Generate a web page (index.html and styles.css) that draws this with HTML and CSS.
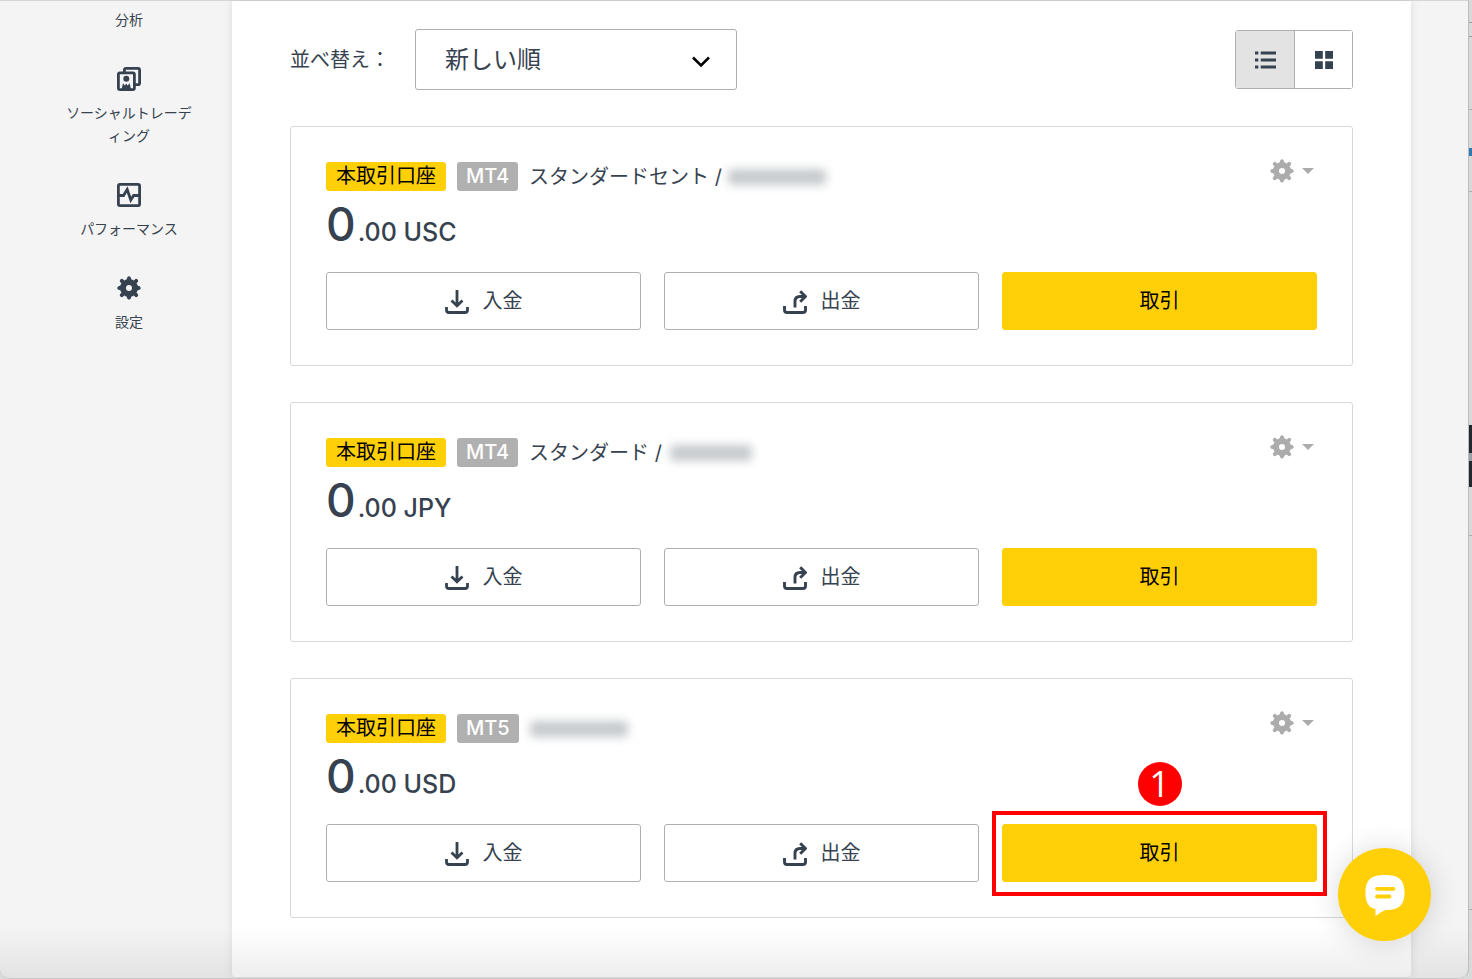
FILE: index.html
```html
<!DOCTYPE html>
<html lang="ja">
<head>
<meta charset="utf-8">
<meta name="viewport" content="width=device-width, initial-scale=1">
<title>口座一覧</title>
<link rel="stylesheet" href="styles.css">
</head>
<body>
<svg class="sprite" aria-hidden="true">
  <symbol id="gear" viewBox="0 0 24 24">
    <circle cx="12" cy="12" r="6" fill="none" stroke="currentColor" stroke-width="6"/>
    <path d="M10.2 1.400Q12-.9 13.800 1.400L14.800 5H9.200ZM10.200 22.600Q12 24.900 13.800 22.600L14.800 19H9.200ZM1.400 10.200Q-.9 12 1.400 13.800L5 14.800V9.200ZM22.600 10.200Q24.900 12 22.600 13.800L19 14.800V9.200Z" fill="currentColor"/>
    <path d="M4.800 4.800l2 2M19.200 4.800l-2 2M4.800 19.200l2-2M19.200 19.200l-2-2" stroke="currentColor" stroke-width="4" stroke-linecap="round"/>
  </symbol>
  <symbol id="deposit" viewBox="0 0 24 24">
    <path d="M12 0v15M6.500 10.500l5.500 5.200 5.500-5.200M1.500 17v3q0 2.500 2.500 2.500h16q2.500 0 2.500-2.500v-3" fill="none" stroke="currentColor" stroke-width="2.800"/>
  </symbol>
  <symbol id="withdraw" viewBox="0 0 24 24">
    <path d="M12 17.500V11.500q0-5 5-5H22.500M17.200 1.200l5.300 5.300-5.300 5.300M1.500 16V20q0 2.500 2.500 2.500h16q2.500 0 2.500-2.500v-4" fill="none" stroke="currentColor" stroke-width="2.900"/>
  </symbol>
</svg>
<div class="screen">
  <div class="window">
    <nav class="sidebar" aria-label="メインメニュー">
      <a class="nav-item" href="#analysis"><span>分析</span></a>
      <a class="nav-item" href="#social">
        <svg class="nav-icon" viewBox="0 0 24 24" fill="none" stroke="currentColor" stroke-width="2.800"><path d="M7.400 5V3q0-1.600 1.600-1.600h12q1.600 0 1.600 1.600v13q0 1.700-1.600 1.700h-3"/><rect x="1.400" y="5.800" width="16" height="16.800" rx="1.500"/><circle cx="9.300" cy="11.700" r="3" fill="currentColor" stroke="none"/><path d="M4.500 22.500L6 16.300l2 2.200 1.300-2 1.300 2 2-2.200 1.500 6.200z" fill="currentColor" stroke="none"/></svg>
        <span>ソーシャルトレーディング</span>
      </a>
      <a class="nav-item" href="#performance">
        <svg class="nav-icon" viewBox="0 0 24 24" fill="none" stroke="currentColor" stroke-width="2.800"><rect x="1.400" y="1.400" width="21.200" height="21.200" rx="1.500"/><path d="M1.500 12.500h5L10.200 6.500l3.600 10.500 2.800-4.500h6"/></svg>
        <span>パフォーマンス</span>
      </a>
      <a class="nav-item" href="#settings"><svg class="nav-icon"><use href="#gear"/></svg><span>設定</span></a>
    </nav>
    <main class="content">
      <div class="toolbar">
        <label for="sort">並べ替え：</label>
        <div class="select-wrap">
          <select id="sort"><option>新しい順</option></select>
          <svg class="chevron" viewBox="0 0 20 12" fill="none" stroke="#000" stroke-width="2.500"><path d="M2 1.500l8 8 8-8"/></svg>
        </div>
        <div class="view-toggle">
          <button class="view active" type="button" aria-label="リスト表示"><svg class="icon-list" viewBox="0 0 22 18" fill="currentColor"><path d="M0 0h3.500v3.200H0zM6 0h16v3.200H6zM0 7.400h3.500v3.200H0zM6 7.400h16v3.200H6zM0 14.800h3.500V18H0zM6 14.800h16V18H6z"/></svg></button>
          <button class="view" type="button" aria-label="グリッド表示"><svg class="icon-grid" viewBox="0 0 18 18" fill="currentColor"><path d="M0 0h7.800v7.800H0zM10.200 0H18v7.800h-7.800zM0 10.200h7.800V18H0zM10.200 10.200H18V18h-7.800z"/></svg></button>
        </div>
      </div>

      <article class="card">
        <header class="card-head">
          <span class="badge real">本取引口座</span><span class="badge platform">MT4</span>
          <span class="account">スタンダードセント /</span><span class="redacted long"></span>
          <button class="card-menu" type="button" aria-label="口座設定"><svg class="menu-gear"><use href="#gear"/></svg><span class="caret"></span></button>
        </header>
        <p class="amount"><strong>0</strong>.00 USC</p>
        <div class="actions">
          <button class="btn" type="button"><svg><use href="#deposit"/></svg><span>入金</span></button>
          <button class="btn" type="button"><svg><use href="#withdraw"/></svg><span>出金</span></button>
          <button class="btn primary" type="button"><span>取引</span></button>
        </div>
      </article>

      <article class="card">
        <header class="card-head">
          <span class="badge real">本取引口座</span><span class="badge platform">MT4</span>
          <span class="account">スタンダード /</span><span class="redacted short"></span>
          <button class="card-menu" type="button" aria-label="口座設定"><svg class="menu-gear"><use href="#gear"/></svg><span class="caret"></span></button>
        </header>
        <p class="amount"><strong>0</strong>.00 JPY</p>
        <div class="actions">
          <button class="btn" type="button"><svg><use href="#deposit"/></svg><span>入金</span></button>
          <button class="btn" type="button"><svg><use href="#withdraw"/></svg><span>出金</span></button>
          <button class="btn primary" type="button"><span>取引</span></button>
        </div>
      </article>

      <article class="card">
        <header class="card-head">
          <span class="badge real">本取引口座</span><span class="badge platform">MT5</span>
          <span class="redacted long lead"></span>
          <button class="card-menu" type="button" aria-label="口座設定"><svg class="menu-gear"><use href="#gear"/></svg><span class="caret"></span></button>
        </header>
        <p class="amount"><strong>0</strong>.00 USD</p>
        <div class="actions">
          <button class="btn" type="button"><svg><use href="#deposit"/></svg><span>入金</span></button>
          <button class="btn" type="button"><svg><use href="#withdraw"/></svg><span>出金</span></button>
          <div class="marked">
            <button class="btn primary" type="button"><span>取引</span></button>
            <span class="mark-box"></span>
            <span class="mark-number">1</span>
          </div>
        </div>
      </article>
    </main>
    <div class="bottom-fade"></div>
  </div>
  <div class="edge" aria-hidden="true"></div>
  <button class="chat" type="button" aria-label="チャット">
    <svg viewBox="0 0 40 42"><path d="M20 1C33 1 39.500 5 39.500 18.500S33 36 21 36c-2 0-5 2.500-10.500 6v-7C3 33.500.5 28 .5 18.500.5 5 7 1 20 1Z" fill="#fff"/><path d="M12 14.800h16.500M12 22.500h12.500" stroke="#ffcf08" stroke-width="3.800" stroke-linecap="round"/></svg>
  </button>
</div>
</body>
</html>
```
FILE: styles.css
```css
* { box-sizing: border-box; }

body {
  margin: 0;
  color: #36424f;
  background: #d8dada;
  font-family: Inter, "Noto Sans CJK JP", sans-serif;
  font-size: 20px;
}

button, select { font: inherit; color: inherit; }
button { margin: 0; padding: 0; cursor: pointer; }
svg { display: block; flex: none; }
.sprite { position: absolute; width: 0; height: 0; }

.screen { display: flex; min-height: 100vh; }

.window {
  position: relative;
  flex: 1;
  min-width: 0;
  display: flex;
  padding: 0 57px 2px 0;
  background: #f4f4f4;
  border-top: 1px solid #d6d6d6;
  border-right: 1px solid #bdbdbd;
  border-radius: 0 0 10px 10px;
}

.bottom-fade {
  position: absolute;
  inset: auto 0 0 0;
  height: 52px;
  border-bottom: 1px solid #c8c8c8;
  border-radius: 0 0 10px 10px;
  background: linear-gradient(rgba(0, 0, 0, 0), rgba(0, 0, 0, 0.07));
  pointer-events: none;
}

/* Sliver of the window behind */
.edge {
  width: 3px;
  background:
    linear-gradient(#9aa0a6, #9aa0a6) 0 453px / 3px 8px no-repeat,
    linear-gradient(#25292f, #25292f) 0 425px / 3px 62px no-repeat,
    linear-gradient(#2f7ab0, #2f7ab0) 0 148px / 3px 8px no-repeat,
    linear-gradient(#9a9d9f, #9a9d9f) 0 22px / 3px 1px no-repeat,
    linear-gradient(#9a9d9f, #9a9d9f) 0 36px / 3px 1px no-repeat,
    linear-gradient(#aeb0b1, #aeb0b1) 0 109px / 3px 1px no-repeat,
    linear-gradient(#aeb0b1, #aeb0b1) 0 191px / 3px 1px no-repeat,
    linear-gradient(#aeb0b1, #aeb0b1) 0 535px / 3px 1px no-repeat,
    linear-gradient(#aeb0b1, #aeb0b1) 0 909px / 3px 1px no-repeat,
    #d8dada;
}

.sidebar {
  flex: none;
  width: 232px;
  padding: 7px 37px 0 63px;
  display: flex;
  flex-direction: column;
  gap: 36px;
}

.nav-item {
  display: flex;
  flex-direction: column;
  align-items: center;
  gap: 10px;
  color: inherit;
  font-size: 14px;
  line-height: 23px;
  text-align: center;
  text-decoration: none;
  line-break: anywhere;
}

.nav-icon { width: 24px; height: 24px; }

.content {
  flex: 1;
  min-width: 0;
  padding: 28px 58px 58px;
  display: flex;
  flex-direction: column;
  gap: 36px;
  background: #fff;
  border-radius: 0 0 4px 4px;
  box-shadow: 0 0 8px rgba(0, 0, 0, 0.1);
}

.toolbar { display: flex; align-items: center; }
.toolbar label { width: 125px; padding-bottom: 2px; white-space: nowrap; }

.select-wrap { position: relative; width: 322px; }

.select-wrap select {
  appearance: none;
  display: block;
  width: 100%;
  height: 61px;
  padding: 0 60px 0 29px;
  border: 1px solid #adb0b2;
  border-radius: 3px;
  background: #fff;
  font-size: 24px;
}

.chevron {
  position: absolute;
  top: 27px;
  right: 26px;
  width: 20px;
  height: 12px;
  pointer-events: none;
}

.view-toggle {
  display: flex;
  margin-left: auto;
  border: 1px solid #adb0b2;
  border-radius: 3px;
}

.view {
  display: flex;
  align-items: center;
  justify-content: center;
  width: 57px;
  height: 57px;
  border: 0;
  background: #fff;
}

.view.active { width: 59px; background: #e3e3e3; border-right: 1px solid #adb0b2; }
.icon-list { width: 21px; height: 18px; }
.icon-grid { width: 18px; height: 18px; }

.card {
  padding: 35px;
  border: 1px solid #d8dada;
  border-radius: 3px;
}

.card-head { display: flex; align-items: center; height: 29px; }

.badge {
  height: 29px;
  border-radius: 3px;
  line-height: 29px;
  white-space: nowrap;
}

.badge.real { padding: 0 10px; background: #ffcf08; color: #000; }
.badge.platform { margin: 0 11px; padding: 0 9px; background: #b0b0b0; color: #fff; font-weight: 500; }
.account { padding-bottom: 2px; white-space: nowrap; }

.redacted {
  height: 16px;
  border-radius: 4px;
  background: #c6cacd;
  filter: blur(5px);
}

.redacted.long { width: 98px; margin-left: 6px; }
.redacted.short { width: 82px; margin-left: 8px; }
.redacted.lead { margin-left: 0; }

.card-menu {
  display: flex;
  align-items: center;
  align-self: flex-start;
  gap: 8px;
  margin: -3px 3px 0 auto;
  border: 0;
  background: none;
  color: #acacac;
}

.menu-gear { width: 24px; height: 24px; }

.caret {
  border: 6px solid transparent;
  border-top-color: currentColor;
  border-bottom: 0;
}

.amount {
  margin: 0;
  height: 81px;
  font-size: 25px;
  font-weight: 500;
  line-height: 66px;
}

.amount strong { margin-right: 2px; font-size: 46px; font-weight: 500; }

.actions {
  display: grid;
  grid-template-columns: repeat(3, 1fr);
  gap: 23px;
}

.btn {
  display: flex;
  align-items: center;
  justify-content: center;
  gap: 14px;
  width: 100%;
  height: 58px;
  border: 1px solid #adb0b2;
  border-radius: 3px;
  background: #fff;
}

.btn span { padding-bottom: 3px; }
.btn svg { width: 24px; height: 24px; margin-top: 2px; }
.btn.primary { border-color: #ffcf08; background: #ffcf08; color: #000; }

.marked { position: relative; }

.mark-box {
  position: absolute;
  inset: -13px -10px -14px;
  border: 4px solid #f00;
  pointer-events: none;
}

.mark-number {
  position: absolute;
  top: -62px;
  left: 50%;
  width: 44px;
  height: 44px;
  margin-left: -22px;
  border-radius: 50%;
  background: #f00;
  color: #fff;
  font-family: "Open Sans", sans-serif;
  font-size: 36px;
  line-height: 44px;
  text-align: center;
}

.chat {
  position: fixed;
  right: 41px;
  bottom: 38px;
  display: flex;
  align-items: center;
  justify-content: center;
  width: 93px;
  height: 93px;
  border: 0;
  border-radius: 50%;
  background: #ffcf08;
  box-shadow: 0 2px 30px rgba(0, 0, 0, 0.16);
}

.chat svg { width: 40px; height: 42px; }
```
